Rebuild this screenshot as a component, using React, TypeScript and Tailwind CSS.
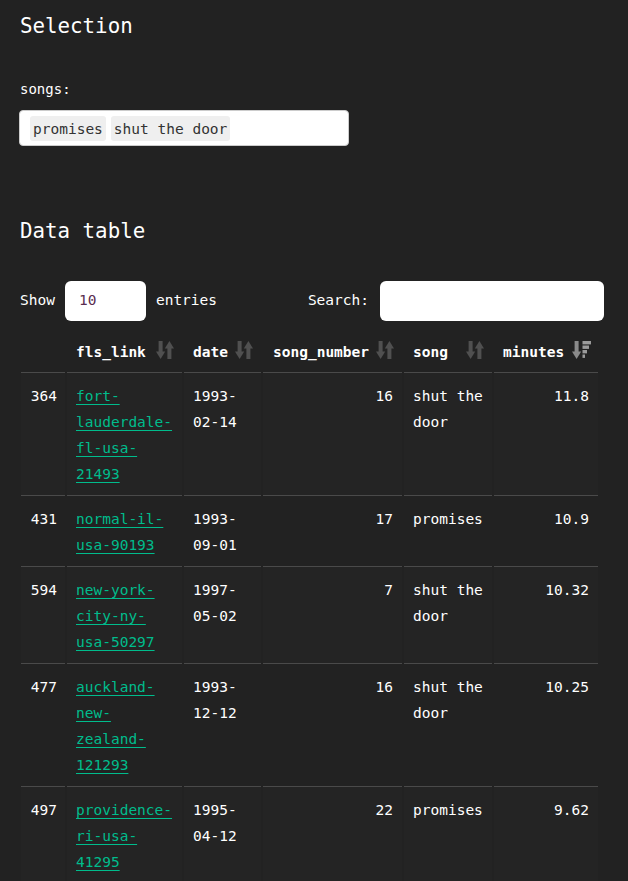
import React from "react";

type Row = {
  idx: string;
  link: string[];
  date: string[];
  num: string;
  song: string[];
  minutes: string;
};

const rows: Row[] = [
  { idx: "364", link: ["fort-", "lauderdale-", "fl-usa-", "21493"], date: ["1993-", "02-14"], num: "16", song: ["shut the", "door"], minutes: "11.8" },
  { idx: "431", link: ["normal-il-", "usa-90193"], date: ["1993-", "09-01"], num: "17", song: ["promises"], minutes: "10.9" },
  { idx: "594", link: ["new-york-", "city-ny-", "usa-50297"], date: ["1997-", "05-02"], num: "7", song: ["shut the", "door"], minutes: "10.32" },
  { idx: "477", link: ["auckland-", "new-", "zealand-", "121293"], date: ["1993-", "12-12"], num: "16", song: ["shut the", "door"], minutes: "10.25" },
  { idx: "497", link: ["providence-", "ri-usa-", "41295"], date: ["1995-", "04-12"], num: "22", song: ["promises"], minutes: "9.62" },
];

function SortIcon() {
  return (
    <svg width="18" height="18" viewBox="0 0 18 18" className="absolute right-[8px] top-[12px]">
      <rect x="2.6" y="0" width="4" height="11.5" fill="#505050" />
      <polygon points="0,10.5 9.2,10.5 4.6,18" fill="#505050" />
      <polygon points="8.8,7.5 18,7.5 13.4,0" fill="#505050" />
      <rect x="11.4" y="6.5" width="4" height="11.5" fill="#505050" />
    </svg>
  );
}

function SortDescIcon() {
  return (
    <svg width="19" height="18" viewBox="0 0 19 18" className="absolute right-[7px] top-[12px]">
      <rect x="2.6" y="0" width="4" height="11.5" fill="#8a8a8a" />
      <polygon points="0,10.5 9.2,10.5 4.6,18" fill="#8a8a8a" />
      <rect x="10.5" y="0" width="8.5" height="3.4" fill="#9a9a9a" />
      <rect x="10.5" y="4.5" width="6.5" height="3.4" fill="#9a9a9a" />
      <rect x="10.5" y="9" width="4.5" height="3.4" fill="#9a9a9a" />
      <rect x="10.5" y="13.5" width="2.5" height="3.4" fill="#9a9a9a" />
    </svg>
  );
}

function Lines({ parts }: { parts: string[] }) {
  return (
    <>
      {parts.map((p, i) => (
        <React.Fragment key={i}>
          {i > 0 && <br />}
          {p}
        </React.Fragment>
      ))}
    </>
  );
}

export default function App() {
  const th = "relative text-left font-bold pt-[10px] pb-[7px] pl-[9px] pr-[30px] leading-[26px] border-b border-[#4a4a4a] whitespace-nowrap";
  return (
    <div className="min-h-[881px] w-full bg-[#222222] text-white font-['DejaVu_Sans_Mono',monospace] text-[14.5px]">
      <div className="pl-[19px] pt-[14px] w-[604px]">
        <h2 className="pl-[1px] text-[20.8px] leading-[25px] font-normal">Selection</h2>

        <div className="pl-[1px] mt-[40px] text-[14px] leading-[20px]">songs:</div>
        <div className="mt-[11px] h-[36px] w-[330px] bg-white border border-[#cccccc] rounded-[4px] pl-[10px] flex items-center gap-[5px]">
          <span className="h-[25px] leading-[26px] px-[3px] bg-[#efefef] text-[#333333] rounded-[3px]">promises</span>
          <span className="h-[25px] leading-[26px] px-[3px] bg-[#efefef] text-[#333333] rounded-[3px]">shut the door</span>
        </div>

        <h2 className="pl-[1px] mt-[73px] text-[20.8px] leading-[25px] font-normal">Data table</h2>

        <div className="mt-[37px] h-[40px] flex items-center">
          <span className="pl-[1px]">Show</span>
          <div className="ml-[10px] w-[81px] h-[40px] bg-white rounded-[6px] pl-[14px] flex items-center text-[#5a2d4f]">10</div>
          <span className="ml-[10px]">entries</span>
          <span className="ml-auto">Search:</span>
          <div className="ml-[11px] w-[224px] h-[40px] bg-white rounded-[6px]" />
        </div>

        <table className="mt-[8px] w-[581px] table-fixed border-separate border-spacing-x-[2px] border-spacing-y-0">
          <thead>
            <tr>
              <th className="w-[44px] border-b border-[#4a4a4a]"></th>
              <th className={`${th} w-[115px]`}>fls_link<SortIcon /></th>
              <th className={`${th} w-[77px]`}>date<SortIcon /></th>
              <th className={`${th} w-[139px] pl-[10px]`}>song_number<SortIcon /></th>
              <th className={`${th} w-[88px]`}>song<SortIcon /></th>
              <th className={`${th} w-[104px]`}>minutes<SortDescIcon /></th>
            </tr>
          </thead>
          <tbody>
            {rows.map((r, i) => {
              const bg = i % 2 === 0 ? "bg-[#242424]" : "bg-[#222222]";
              const td = `${bg} align-top pt-[10px] pb-[8px] leading-[26px] border-b border-[#4a4a4a] whitespace-nowrap`;
              return (
                <tr key={r.idx}>
                  <td className={`${td} text-right pr-[8px]`}>{r.idx}</td>
                  <td className={`${td} pl-[9px] pr-[8px]`}>
                    <a href="#" className="text-[#00bc8c] underline underline-offset-[3px]">
                      <Lines parts={r.link} />
                    </a>
                  </td>
                  <td className={`${td} pl-[9px] pr-[8px]`}><Lines parts={r.date} /></td>
                  <td className={`${td} text-right pr-[9px]`}>{r.num}</td>
                  <td className={`${td} pl-[9px] pr-[8px]`}><Lines parts={r.song} /></td>
                  <td className={`${td} text-right pr-[9px]`}>{r.minutes}</td>
                </tr>
              );
            })}
          </tbody>
        </table>
      </div>
    </div>
  );
}
